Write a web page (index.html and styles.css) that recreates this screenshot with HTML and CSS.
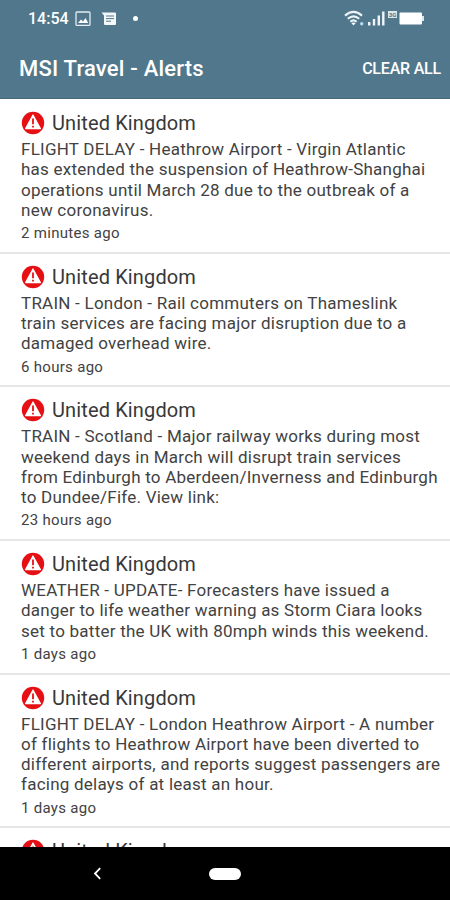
FILE: index.html
```html
<!DOCTYPE html>
<html lang="en">
<head>
    <meta charset="UTF-8">
    <meta name="viewport" content="width=device-width, initial-scale=1.0">
    <title>MSI Travel - Alerts</title>
    <link rel="stylesheet" href="styles.css">
</head>
<body>

<svg class="defs" width="0" height="0">
    <symbol id="warning" viewBox="0 0 24 24">
        <circle cx="12" cy="12" r="11.2" fill="#e60f14"/>
        <path d="M12 4 L19.4 17.6 H4.6 Z" fill="#fff" stroke="#fff" stroke-width="1.2" stroke-linejoin="round"/>
        <path d="M12 7.5 V13.2 M12 14.8 V16.6" stroke="#e60f14" stroke-width="1.8"/>
    </symbol>
</svg>

<div class="phone">
    <header class="header">
        <div class="status-bar">
            <span class="clock">14:54</span>
            <svg class="icon-picture" width="16" height="16" viewBox="0 0 16 16">
                <rect x="1" y="1" width="14" height="13.4" rx="1" fill="none" stroke="#e3edf3" stroke-width="1.3"/>
                <path d="M3 12 L6 8.5 L8 10.5 L10.5 7 L13.2 12 Z" fill="#fff"/>
            </svg>
            <svg class="icon-message" width="16" height="14" viewBox="0 0 16 14">
                <path d="M0.5 0.5 H14 Q15 0.5 15 1.5 V12 Q15 13 14 13 H4 Q3 13 3 12 V3.5 Z" fill="#f4f8fa"/>
                <path d="M5 4 H13 M5 6.6 H13 M5 9.2 H10" stroke="#51778c" stroke-width="1"/>
            </svg>
            <span class="dot"></span>
            <span class="spacer"></span>
            <svg class="icon-wifi" width="21" height="17" viewBox="0 0 21 17">
                <g fill="none" stroke="#edf3f6" stroke-width="2.1">
                    <path d="M1 5.6 Q9.5 -2 18 5.6"/>
                    <path d="M3.8 8.8 Q9.5 3.8 15.2 8.8"/>
                    <path d="M6.4 11.7 Q9.5 9 12.6 11.7"/>
                </g>
                <path d="M7.4 13 Q9.5 11.8 11.6 13 L9.5 15.6 Z" fill="#fff"/>
                <circle cx="17.7" cy="13.8" r="1.7" fill="#b9dcef"/>
            </svg>
            <svg class="icon-signal" width="17" height="15" viewBox="0 0 17 15">
                <path d="M1.2 14.5 V11 M6 14.5 V8 M10.8 14.5 V4.5 M15.3 14.5 V0.5" stroke="#f1f5f8" stroke-width="2.4"/>
            </svg>
            <span class="network">3G</span>
            <svg class="icon-battery" width="26" height="13" viewBox="0 0 26 13">
                <rect x="0.5" y="0.5" width="22.5" height="12" rx="1" fill="#fff"/>
                <rect x="23" y="4" width="2" height="5" fill="#dbe6ec"/>
            </svg>
        </div>
        <div class="toolbar">
            <h1 class="title">MSI Travel - Alerts</h1>
            <span class="clear">CLEAR ALL</span>
        </div>
    </header>

    <main class="alerts">
        <div class="alert">
            <div class="country"><svg class="warning"><use href="#warning"/></svg><span>United Kingdom</span></div>
            <p class="message">FLIGHT DELAY - Heathrow Airport - Virgin Atlantic<br>has extended the suspension of Heathrow-Shanghai<br>operations until March 28 due to the outbreak of a<br>new coronavirus.</p>
            <div class="time">2 minutes ago</div>
        </div>
        <div class="alert">
            <div class="country"><svg class="warning"><use href="#warning"/></svg><span>United Kingdom</span></div>
            <p class="message">TRAIN - London - Rail commuters on Thameslink<br>train services are facing major disruption due to a<br>damaged overhead wire.</p>
            <div class="time">6 hours ago</div>
        </div>
        <div class="alert">
            <div class="country"><svg class="warning"><use href="#warning"/></svg><span>United Kingdom</span></div>
            <p class="message">TRAIN - Scotland - Major railway works during most<br>weekend days in March will disrupt train services<br>from Edinburgh to Aberdeen/Inverness and Edinburgh<br>to Dundee/Fife. View link:</p>
            <div class="time">23 hours ago</div>
        </div>
        <div class="alert">
            <div class="country"><svg class="warning"><use href="#warning"/></svg><span>United Kingdom</span></div>
            <p class="message">WEATHER - UPDATE- Forecasters have issued a<br>danger to life weather warning as Storm Ciara looks<br>set to batter the UK with 80mph winds this weekend.</p>
            <div class="time">1 days ago</div>
        </div>
        <div class="alert">
            <div class="country"><svg class="warning"><use href="#warning"/></svg><span>United Kingdom</span></div>
            <p class="message">FLIGHT DELAY - London Heathrow Airport - A number<br>of flights to Heathrow Airport have been diverted to<br>different airports, and reports suggest passengers are<br>facing delays of at least an hour.</p>
            <div class="time">1 days ago</div>
        </div>
        <div class="alert">
            <div class="country"><svg class="warning"><use href="#warning"/></svg><span>United Kingdom</span></div>
        </div>
    </main>

    <nav class="nav-bar">
        <svg class="back" width="9" height="13" viewBox="0 0 9 13">
            <path d="M7.2 1.2 L2 6.5 L7.2 11.8" fill="none" stroke="#fff" stroke-width="1.8"/>
        </svg>
        <span class="home"></span>
    </nav>
</div>

</body>
</html>
```

FILE: styles.css
```css
* {
    box-sizing: border-box;
}
body {
    margin: 0;
    font-family: Roboto, sans-serif;
    background: #fff;
}
.defs {
    display: block;
}
.phone {
    display: flex;
    flex-direction: column;
    width: 450px;
    height: 900px;
    overflow: hidden;
}
.header {
    height: 99px;
    flex: none;
    background: #51778c;
    border-bottom: 1px solid #45697e;
    color: #fff;
}
.status-bar {
    display: flex;
    align-items: center;
    height: 37px;
    padding: 0 25px 0 28px;
}
.clock {
    width: 41px;
    font-size: 16px;
    font-weight: 500;
    line-height: 38px;
    white-space: nowrap;
}
.icon-picture {
    margin-left: 6px;
}
.icon-message {
    margin-left: 10px;
}
.dot {
    width: 5px;
    height: 5px;
    margin-left: 16px;
    border-radius: 50%;
    background: #fff;
}
.spacer {
    flex: 1;
}
.icon-signal {
    margin-left: 3px;
}
.network {
    width: 9px;
    height: 7px;
    margin: -8px 2px 0 3px;
    background: #dce6ec;
    color: #51778c;
    font-size: 6px;
    font-weight: 700;
    line-height: 7px;
    text-align: center;
}
.toolbar {
    display: flex;
    align-items: center;
    justify-content: space-between;
    height: 62px;
    padding: 0 9px 0 19px;
}
.title {
    margin: 0;
    font-size: 22px;
    font-weight: 500;
    letter-spacing: 0.2px;
}
.clear {
    font-size: 16px;
    font-weight: 500;
    letter-spacing: -0.2px;
}
.alerts {
    height: 748px;
    flex: none;
    overflow: hidden;
    padding-top: 1px;
}
.alert {
    padding: 10px 0 9px 21px;
    border-bottom: 2px solid #e4e6e8;
}
.country {
    display: flex;
    align-items: center;
    height: 26px;
    margin-bottom: 3px;
    color: #383838;
    font-size: 20px;
    letter-spacing: 0.13px;
}
.warning {
    width: 24px;
    height: 24px;
    margin-right: 7px;
}
.message {
    margin: 0;
    color: #424242;
    font-size: 17px;
    letter-spacing: 0.24px;
    line-height: 20.3px;
    white-space: nowrap;
}
.time {
    height: 22.6px;
    padding-top: 3px;
    color: #424242;
    font-size: 15px;
    letter-spacing: 0.3px;
    line-height: 20px;
}
.nav-bar {
    display: flex;
    align-items: center;
    flex: 1;
    padding-left: 93px;
    background: #000;
}
.home {
    width: 32px;
    height: 12px;
    margin-left: 107px;
    border-radius: 6px;
    background: #fff;
}
```
